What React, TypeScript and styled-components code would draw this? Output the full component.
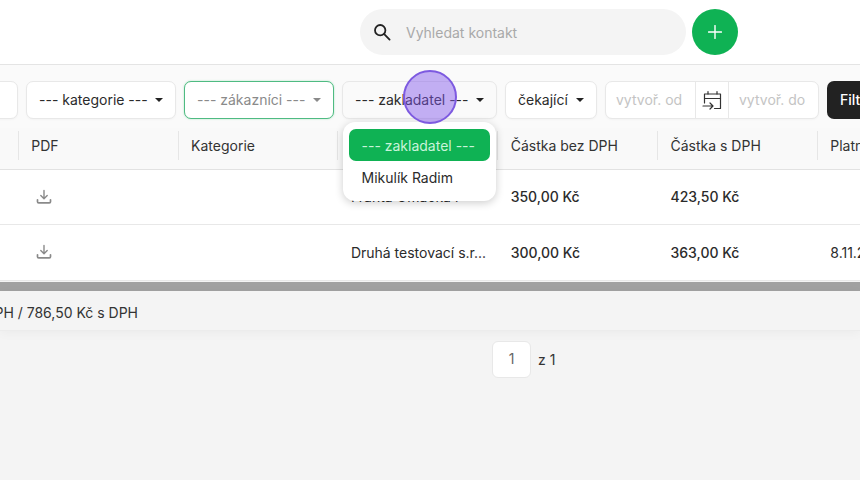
import React from "react";
import styled, { createGlobalStyle } from "styled-components";

const Global = createGlobalStyle`
  html, body { margin: 0; padding: 0; background: #f4f4f4; }
  body { font-family: "Inter", "Liberation Sans", sans-serif; color: #222; overflow: hidden; }
  #root { width: 860px; height: 480px; overflow: hidden; position: relative; }
`;

const Page = styled.div`
  width: 860px;
  height: 480px;
  display: flex;
  flex-direction: column;
  position: relative;
  overflow: hidden;
`;

const Header = styled.header`
  height: 64px;
  flex: none;
  background: #fff;
  border-bottom: 1px solid #e4e4e4;
  display: flex;
  align-items: center;
  gap: 6px;
  padding: 0 0 0 360px;
`;

const Search = styled.div`
  width: 326px;
  height: 46px;
  border-radius: 23px;
  background: #f4f4f4;
  display: flex;
  align-items: center;
  gap: 14px;
  padding-left: 12px;
  box-sizing: border-box;
  font-size: 14px;
  color: #a9a9a9;
`;

const AddButton = styled.div`
  width: 46px;
  height: 46px;
  border-radius: 50%;
  background: #0fb254;
  display: flex;
  align-items: center;
  justify-content: center;
`;

const FilterBar = styled.div`
  height: 63px;
  flex: none;
  background: #fafafa;
  display: flex;
  align-items: flex-start;
  gap: 8px;
  padding: 16px 0 0 0;
  margin-left: -82px;
  width: 1100px;
  box-sizing: border-box;
`;

const SelectBox = styled.div<{ $w: number; $active?: boolean; $muted?: boolean; $bg?: string }>`
  width: ${(p) => p.$w}px;
  height: 38px;
  flex: none;
  box-sizing: border-box;
  border-radius: 7px;
  background: ${(p) => p.$bg ?? "#fff"};
  border: 1px solid ${(p) => (p.$active ? "#4fbb82" : "#e8e8e8")};
  box-shadow: ${(p) => (p.$active ? "0 0 2px rgba(15,178,84,0.35)" : "0 1px 2px rgba(0,0,0,0.03)")};
  display: flex;
  align-items: center;
  justify-content: space-between;
  padding: 0 12px 1px;
  font-size: 14px;
  white-space: nowrap;
  color: ${(p) => (p.$muted ? "#8a8a8a" : "#2b2b2b")};
`;

const Caret = styled.span<{ $muted?: boolean }>`
  width: 0;
  height: 0;
  border-left: 4px solid transparent;
  border-right: 4px solid transparent;
  border-top: 4px solid ${(p) => (p.$muted ? "#8a8a8a" : "#222")};
  flex: none;
`;

const DateGroup = styled.div`
  width: 214px;
  height: 38px;
  flex: none;
  box-sizing: border-box;
  border-radius: 7px;
  background: #fff;
  border: 1px solid #e8e8e8;
  box-shadow: 0 1px 2px rgba(0, 0, 0, 0.03);
  display: grid;
  grid-template-columns: 89px 34px 1fr;
`;

const DateField = styled.div`
  display: flex;
  align-items: center;
  padding: 0 0 1px 10px;
  font-size: 14px;
  color: #c4c4c4;
`;

const DateIcon = styled.div`
  display: flex;
  align-items: center;
  justify-content: center;
  border-left: 1px solid #e8e8e8;
  border-right: 1px solid #e8e8e8;
`;

const FilterButton = styled.div`
  width: 120px;
  height: 38px;
  flex: none;
  border-radius: 7px;
  background: #222;
  color: #fff;
  font-size: 14px;
  font-weight: 500;
  display: flex;
  align-items: center;
  padding: 0 0 1px 13px;
  box-sizing: border-box;
`;

const TableWrap = styled.div`
  background: #fff;
  flex: none;
  height: 153px;
  overflow: hidden;
`;

const Row = styled.div<{ $head?: boolean; $h: number }>`
  display: grid;
  grid-template-columns: repeat(8, 159.8px);
  margin-left: -141px;
  width: 1290px;
  height: ${(p) => p.$h}px;
  box-sizing: border-box;
  background: ${(p) => (p.$head ? "#f9f9f9" : "#fff")};
  border-bottom: 1px solid ${(p) => (p.$head ? "#e2e2e2" : "#e8e8e8")};
`;

const HeadCell = styled.div`
  display: flex;
  align-items: center;
  padding: 0 0 7px 12.5px;
  font-size: 14px;
  color: #333;
  position: relative;
  white-space: nowrap;
  &::after {
    content: "";
    position: absolute;
    right: 0;
    top: 3px;
    height: 29px;
    width: 1px;
    background: #e6e6e6;
  }
`;

const Cell = styled.div<{ $strong?: boolean }>`
  display: flex;
  align-items: center;
  padding: 0 0 1px 12.5px;
  font-size: 14px;
  font-weight: ${(p) => (p.$strong ? 500 : 400)};
  color: #2b2b2b;
  white-space: nowrap;
  overflow: hidden;
`;

const IconSlot = styled.span`
  margin-left: 5px;
  display: flex;
`;

const ScrollTrack = styled.div`
  height: 10px;
  flex: none;
  background: #f4f4f4;
  display: flex;
  align-items: flex-end;
`;

const ScrollThumb = styled.div`
  height: 9px;
  width: 100%;
  background: #a1a1a1;
`;

const Summary = styled.div`
  height: 40px;
  flex: none;
  background: #f4f4f4;
  box-shadow: 0 2px 10px rgba(0, 0, 0, 0.04);
  border-bottom: 1px solid #ececec;
  box-sizing: border-box;
  display: flex;
  align-items: center;
  font-size: 14px;
  color: #333;
`;

const SummaryText = styled.div`
  width: 138px;
  display: flex;
  justify-content: flex-end;
  white-space: nowrap;
  padding-top: 3px;
`;

const Pagination = styled.div`
  display: flex;
  align-items: center;
  gap: 7px;
  padding: 10px 0 0 492px;
  font-size: 14px;
  color: #333;
`;

const PageInput = styled.div`
  width: 39px;
  height: 37px;
  box-sizing: border-box;
  background: #fff;
  border: 1px solid #e8e8e8;
  border-radius: 6px;
  display: flex;
  align-items: center;
  justify-content: center;
  padding-bottom: 2px;
  color: #666;
`;

const Menu = styled.div`
  position: absolute;
  left: 343px;
  top: 122px;
  width: 153px;
  height: 79px;
  box-sizing: border-box;
  background: #fff;
  border-radius: 12px;
  box-shadow: 0 2px 8px rgba(0, 0, 0, 0.2);
  padding: 7px 6px;
  font-size: 14px;
`;

const MenuItem = styled.div<{ $selected?: boolean }>`
  height: 32px;
  border-radius: 7px;
  display: flex;
  align-items: center;
  padding-left: 12.5px;
  white-space: nowrap;
  background: ${(p) => (p.$selected ? "#0fb254" : "transparent")};
  color: ${(p) => (p.$selected ? "#c9f3da" : "#2b2b2b")};
`;

const Cursor = styled.div`
  position: absolute;
  left: 403px;
  top: 70px;
  width: 54px;
  height: 54px;
  box-sizing: border-box;
  border-radius: 50%;
  background: rgba(128, 84, 236, 0.46);
  border: 2px solid #7d5ae0;
`;

const DownloadIcon = () => (
  <svg width="16" height="16" viewBox="0 0 16 16" fill="none" stroke="#8a8a8a" strokeWidth="1.4" strokeLinecap="round" strokeLinejoin="round">
    <path d="M8 1.5v8M4.8 6.5L8 9.7l3.2-3.2" />
    <path d="M1.5 10.8v1.9c0 .7.5 1.2 1.2 1.2h10.6c.7 0 1.2-.5 1.2-1.2v-1.9" strokeWidth="1.7" />
  </svg>
);

const SearchIcon = () => (
  <svg width="20" height="20" viewBox="0 0 20 20" fill="none" stroke="#222" strokeWidth="1.8" strokeLinecap="round">
    <circle cx="8.2" cy="8.2" r="5.2" />
    <path d="M12.2 12.2l5.4 5.4" />
  </svg>
);

const PlusIcon = () => (
  <svg width="14" height="14" viewBox="0 0 14 14" fill="none" stroke="#fff" strokeWidth="1.4" strokeLinecap="round">
    <path d="M7 .6v12.8M.6 7h12.8" />
  </svg>
);

const CalendarIcon = () => (
  <svg width="20" height="20" viewBox="0 0 20 20" fill="none" stroke="#333" strokeWidth="1.2" strokeLinecap="round" strokeLinejoin="round">
    <path d="M2.5 13V4h16v14.5h-6" />
    <path d="M2.5 8.5h16M6 1.5v2.5M15 1.5v2.5" />
    <path d="M1 16h10M8 13l3 3-3 3" />
  </svg>
);

const columns = ["", "PDF", "Kategorie", "", "Částka bez DPH", "Částka s DPH", "Platnost", ""];

const rows = [
  { name: "Franta Omáčka r", net: "350,00 Kč", gross: "423,50 Kč", date: "" },
  { name: "Druhá testovací s.r...", net: "300,00 Kč", gross: "363,00 Kč", date: "8.11.2023" },
];

export default function App() {
  return (
    <Page>
      <Global />
      <Header>
        <Search>
          <SearchIcon />
          Vyhledat kontakt
        </Search>
        <AddButton>
          <PlusIcon />
        </AddButton>
      </Header>
      <FilterBar>
        <SelectBox $w={100} />
        <SelectBox $w={150}>
          --- kategorie ---
          <Caret />
        </SelectBox>
        <SelectBox $w={150} $active $muted>
          --- zákazníci ---
          <Caret $muted />
        </SelectBox>
        <SelectBox $w={155} $bg="#fafafa">
          --- zakladatel ---
          <Caret />
        </SelectBox>
        <SelectBox $w={92}>
          čekající
          <Caret />
        </SelectBox>
        <DateGroup>
          <DateField>vytvoř. od</DateField>
          <DateIcon>
            <CalendarIcon />
          </DateIcon>
          <DateField>vytvoř. do</DateField>
        </DateGroup>
        <FilterButton>Filtrovat</FilterButton>
      </FilterBar>
      <TableWrap>
        <Row $head $h={42}>
          {columns.map((c, i) => (
            <HeadCell key={i}>{c}</HeadCell>
          ))}
        </Row>
        {rows.map((r, i) => (
          <Row key={i} $h={i === 0 ? 55 : 56}>
            <Cell />
            <Cell>
              <IconSlot>
                <DownloadIcon />
              </IconSlot>
            </Cell>
            <Cell />
            <Cell>{r.name}</Cell>
            <Cell $strong>{r.net}</Cell>
            <Cell $strong>{r.gross}</Cell>
            <Cell>{r.date}</Cell>
            <Cell />
          </Row>
        ))}
      </TableWrap>
      <ScrollTrack>
        <ScrollThumb />
      </ScrollTrack>
      <Summary>
        <SummaryText>650,00 Kč bez DPH / 786,50 Kč s DPH</SummaryText>
      </Summary>
      <Pagination>
        <PageInput>1</PageInput>z 1
      </Pagination>
      <Menu>
        <MenuItem $selected>--- zakladatel ---</MenuItem>
        <MenuItem>Mikulík Radim</MenuItem>
      </Menu>
      <Cursor />
    </Page>
  );
}
